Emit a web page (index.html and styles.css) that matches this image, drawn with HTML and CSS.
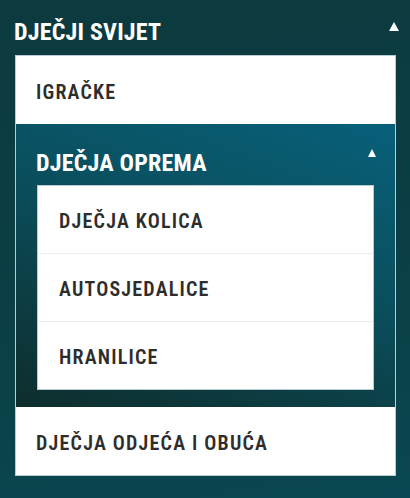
FILE: index.html
```html
<!DOCTYPE html>
<html lang="hr">
<head>
    <meta charset="utf-8">
    <meta name="viewport" content="width=device-width, initial-scale=1">
    <title>Dječji svijet</title>
    <link rel="stylesheet" href="styles.css">
</head>

<body>

    <div class="menu">
        <div class="menu-head">
            <span class="menu-title">DJEČJI SVIJET</span>
            <span class="arrow"></span>
        </div>

        <div class="panel">
            <a class="item" href="#">IGRAČKE</a>

            <div class="sub">
                <div class="sub-head">
                    <span class="sub-title">DJEČJA OPREMA</span>
                    <span class="arrow small"></span>
                </div>
                <div class="sub-list">
                    <a class="sub-item" href="#">DJEČJA KOLICA</a>
                    <a class="sub-item" href="#">AUTOSJEDALICE</a>
                    <a class="sub-item" href="#">HRANILICE</a>
                </div>
            </div>

            <a class="item" href="#">DJEČJA ODJEĆA I OBUĆA</a>
        </div>
    </div>

</body>
</html>
```

FILE: styles.css
```css
body {
    margin: 0;
    height: 498px;
    font-family: 'Roboto', 'Liberation Sans', sans-serif;
    font-weight: 700;
    font-stretch: condensed;
    background: linear-gradient(170deg, #0c3a3e 0%, #0b3f45 55%, #0a4752 100%);
}

.menu {
    padding: 18px 11px 0 14px;
}

.menu-head {
    display: flex;
    justify-content: space-between;
    align-items: center;
    height: 27px;
    margin-bottom: 10px;
}

.menu-title {
    color: #fff;
    font-size: 24px;
    letter-spacing: 0.2px;
}

.arrow {
    align-self: flex-start;
    width: 0;
    height: 0;
    margin-top: 4px;
    border-left: 5.5px solid transparent;
    border-right: 5.5px solid transparent;
    border-bottom: 9px solid #fff;
}

.arrow.small {
    margin-top: 25px;
    margin-right: -2px;
    border-left-width: 4.5px;
    border-right-width: 4.5px;
    border-bottom-width: 8px;
}

.panel {
    margin: 0 3px 0 1px;
    border: 1px solid #b9ccd2;
    background: #fff;
}

.item {
    display: flex;
    align-items: center;
    height: 65px;
    padding: 3px 0 0 20px;
    color: #2d2d2d;
    font-size: 20px;
    font-weight: 600;
    letter-spacing: 1.2px;
    text-decoration: none;
}

.sub {
    padding: 0 21px 17px 21px;
    background: linear-gradient(200deg, #08607a 0%, #0a4e5c 45%, #0e2d2c 100%);
}

.sub-head {
    display: flex;
    justify-content: space-between;
    align-items: center;
    height: 61px;
}

.sub-title {
    color: #fff;
    font-size: 24px;
    letter-spacing: 0.2px;
    margin-left: -1px;
    margin-top: 16px;
}

.sub-list {
    background: #fff;
    border: 1px solid #b9ccd2;
}

.sub-item {
    display: flex;
    align-items: center;
    height: 64px;
    padding: 3px 0 0 21px;
    border-top: 1px solid #ececec;
    color: #2d2d2d;
    font-size: 20px;
    font-weight: 600;
    letter-spacing: 1.2px;
    text-decoration: none;
}

.sub-item:first-child {
    border-top: none;
}
```
